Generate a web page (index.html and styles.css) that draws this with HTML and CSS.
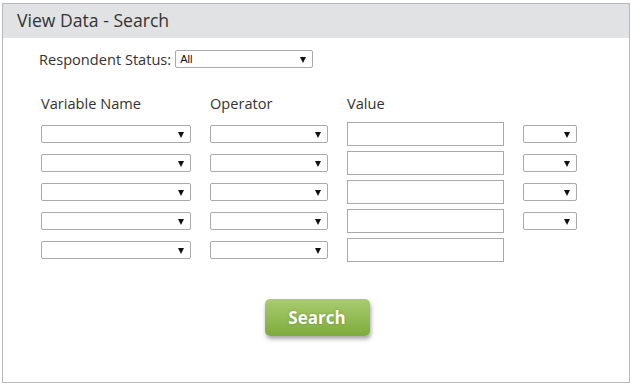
FILE: index.html
```html
<!DOCTYPE html>
<html lang="en">
<head>
    <meta charset="UTF-8">
    <title>View Data - Search</title>
    <link rel="stylesheet" href="styles.css">
</head>
<body>
    <div class="panel">
        <div class="panel-head">View Data - Search</div>
        <div class="panel-body">
            <div class="status-row">
                <span class="status-label">Respondent Status:</span>
                <div class="pick pick-status"><span>All</span></div>
            </div>

            <div class="criteria">
                <div class="col-head">Variable Name</div>
                <div class="col-head">Operator</div>
                <div class="col-head">Value</div>
                <div></div>

                <div class="pick"></div><div class="pick"></div><div class="field"></div><div class="pick"></div>
                <div class="pick"></div><div class="pick"></div><div class="field"></div><div class="pick"></div>
                <div class="pick"></div><div class="pick"></div><div class="field"></div><div class="pick"></div>
                <div class="pick"></div><div class="pick"></div><div class="field"></div><div class="pick"></div>
                <div class="pick"></div><div class="pick"></div><div class="field"></div><div></div>
            </div>

            <div class="actions">
                <button class="search-btn">Search</button>
            </div>
        </div>
    </div>
</body>
</html>
```

FILE: styles.css
```css
body {
    margin: 0;
    background: #fff;
    font-family: "Open Sans", "Noto Sans", sans-serif;
    color: #333;
}

.panel {
    margin: 3px 2px 1px 2px;
    width: 626px;
    height: 378px;
    border: 1px solid #b9b9b9;
}

.panel-head {
    height: 34px;
    line-height: 33px;
    padding-left: 14px;
    background: #e1e2e3;
    font-size: 17.6px;
    color: #333;
}

.panel-body {
    padding: 12px 0 0 36px;
}

.status-row {
    display: flex;
    align-items: center;
    gap: 4px;
    height: 18px;
}

.status-label {
    font-size: 14.6px;
}

.pick {
    position: relative;
    height: 16px;
    border: 1px solid #a9a9a9;
    border-radius: 2px;
    background: #fff;
}

.pick::after {
    content: "";
    position: absolute;
    right: 6px;
    top: 6px;
    border-left: 3.5px solid transparent;
    border-right: 3.5px solid transparent;
    border-top: 6px solid #111;
}

.pick-status {
    width: 136px;
}

.pick-status span {
    display: block;
    padding-left: 4px;
    line-height: 16px;
    font-family: "Liberation Sans", Arial, sans-serif;
    font-size: 11px;
    color: #111;
}

.criteria {
    display: grid;
    grid-template-columns: 150px 118px 157px 54px;
    grid-auto-rows: 24px;
    column-gap: 19px;
    row-gap: 5px;
    align-items: center;
    margin: 25px 0 0 2px;
}

.criteria .col-head {
    font-size: 14.6px;
    align-self: start;
    margin-top: 0;
}

.field {
    height: 22px;
    border: 1px solid #a9a9a9;
    background: #fff;
}

.actions {
    display: flex;
    justify-content: center;
    padding-right: 34px;
    margin-top: 37px;
}

.search-btn {
    width: 105px;
    height: 37px;
    border: none;
    border-radius: 5px;
    background: linear-gradient(#a9cc70, #7dab3c);
    box-shadow: 1px 3px 4px rgba(0, 0, 0, 0.35);
    color: #fff;
    font-family: "Open Sans", sans-serif;
    font-weight: bold;
    font-size: 17px;
    text-shadow: 0 0 2px rgba(60, 90, 20, 0.5);
    cursor: pointer;
}
```
